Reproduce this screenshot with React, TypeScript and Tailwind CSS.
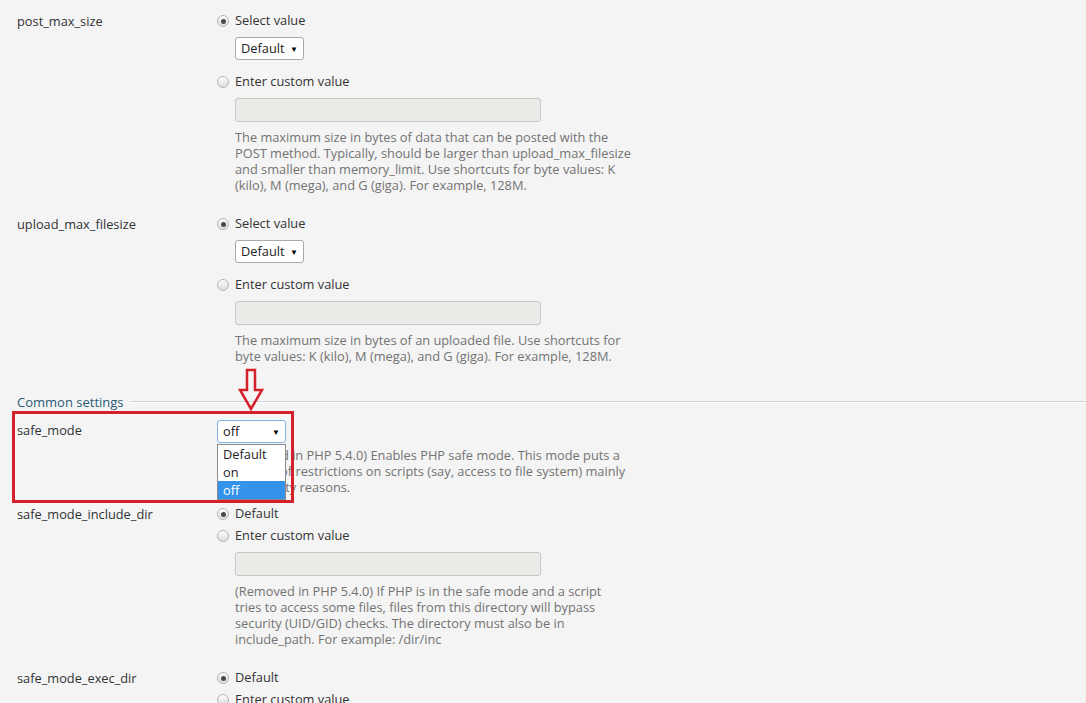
import React from 'react';

const font = { fontFamily: '"Open Sans", "Liberation Sans", sans-serif' };

const Radio = ({ checked, label }: { checked?: boolean; label: string }) => (
  <div className="flex h-[22px] items-center">
    <span className="flex h-[12px] w-[12px] items-center justify-center rounded-full border border-[#b5b5b5] bg-gradient-to-b from-[#fdfdfd] to-[#dcdcdc]">
      {checked && <span className="h-[5px] w-[5px] rounded-full bg-[#4a4a4a]" />}
    </span>
    <span className="ml-[6px] text-[12.8px] text-[#333]">{label}</span>
  </div>
);

const FakeSelect = ({ value, focused }: { value: string; focused?: boolean }) => (
  <div
    className={`flex h-[23px] w-[69px] items-center justify-between rounded-[3px] border bg-white pl-[5px] pr-[5px] text-[12.8px] text-[#222] ${
      focused ? 'border-[#7eb4ea]' : 'border-[#a9a9a9]'
    }`}
  >
    <span>{value}</span>
    <span className="text-[8px] text-black">▼</span>
  </div>
);

const TextBox = () => (
  <div className="ml-[18px] mt-[5px] h-[24px] w-[306px] rounded-[3px] border border-[#c6c6c6] bg-[#ebebe7]" />
);

const Desc = ({ lines, className = 'ml-[18px] mt-[7px]' }: { lines: string[]; className?: string }) => (
  <p className={`${className} text-[12.8px] leading-[16px] text-[#737373]`}>
    {lines.map((l, i) => (
      <React.Fragment key={i}>
        {l}
        {i < lines.length - 1 && <br />}
      </React.Fragment>
    ))}
  </p>
);

const Row = ({ name, children, className = '' }: { name: string; children: React.ReactNode; className?: string }) => (
  <div className={`grid grid-cols-[200px_1fr] ${className}`}>
    <div className="h-[22px] text-[12.8px] leading-[22px] text-[#333]">{name}</div>
    <div className="flex flex-col">{children}</div>
  </div>
);

export default function App() {
  return (
    <div className="relative h-[703px] overflow-hidden bg-[#f4f4f4] pl-[17px] pt-[10px]" style={font}>
      <Row name="post_max_size" className="mb-[20px]">
        <Radio checked label="Select value" />
        <div className="ml-[18px] mt-[5px]">
          <FakeSelect value="Default" />
        </div>
        <div className="mt-[11px]">
          <Radio label="Enter custom value" />
        </div>
        <TextBox />
        <Desc
          lines={[
            'The maximum size in bytes of data that can be posted with the',
            'POST method. Typically, should be larger than upload_max_filesize',
            'and smaller than memory_limit. Use shortcuts for byte values: K',
            '(kilo), M (mega), and G (giga). For example, 128M.',
          ]}
        />
      </Row>

      <Row name="upload_max_filesize">
        <Radio checked label="Select value" />
        <div className="ml-[18px] mt-[5px]">
          <FakeSelect value="Default" />
        </div>
        <div className="mt-[11px]">
          <Radio label="Enter custom value" />
        </div>
        <TextBox />
        <Desc
          lines={[
            'The maximum size in bytes of an uploaded file. Use shortcuts for',
            'byte values: K (kilo), M (mega), and G (giga). For example, 128M.',
          ]}
        />
      </Row>

      <div className="mt-[29px] flex h-[18px] items-center">
        <span className="text-[13px] leading-[18px] text-[#2a5a78]">Common settings</span>
        <div className="ml-[6px] h-[2px] flex-1 border-t border-b border-t-[#d2d2d2] border-b-white" />
      </div>

      <Row name="safe_mode" className="mb-[8px] mt-[8px]">
        <div className="relative mt-[1px] w-[69px]">
          <FakeSelect value="off" focused />
          <ul className="absolute left-0 top-[24px] z-10 w-[69px] border border-[#8c8c8c] bg-white text-[12.8px] leading-[18px] text-[#222]">
            <li className="pl-[5px]">Default</li>
            <li className="pl-[5px]">on</li>
            <li className="bg-[#3393ea] pl-[5px] text-white">off</li>
          </ul>
        </div>
        <Desc
          className="ml-[12px] mt-[4px]"
          lines={[
            '(Removed in PHP 5.4.0) Enables PHP safe mode. This mode puts a',
            'number of restrictions on scripts (say, access to file system) mainly',
            'for security reasons.',
          ]}
        />
      </Row>

      <Row name="safe_mode_include_dir" className="mb-[20px]">
        <Radio checked label="Default" />
        <Radio label="Enter custom value" />
        <TextBox />
        <Desc
          lines={[
            '(Removed in PHP 5.4.0) If PHP is in the safe mode and a script',
            'tries to access some files, files from this directory will bypass',
            'security (UID/GID) checks. The directory must also be in',
            'include_path. For example: /dir/inc',
          ]}
        />
      </Row>

      <Row name="safe_mode_exec_dir">
        <Radio checked label="Default" />
        <Radio label="Enter custom value" />
        <TextBox />
      </Row>

      {/* annotation overlay */}
      <div className="pointer-events-none absolute left-[12px] top-[411px] h-[92px] w-[282px] border-[3px] border-[#d3202b]" />
      <svg className="pointer-events-none absolute left-[238px] top-[368px]" width="26" height="44" viewBox="0 0 26 44">
        <path
          d="M9 2 H17 V22 H24 L13 41 L2 22 H9 Z"
          fill="none"
          stroke="#d3202b"
          strokeWidth="2.5"
          strokeLinejoin="miter"
        />
      </svg>
    </div>
  );
}
